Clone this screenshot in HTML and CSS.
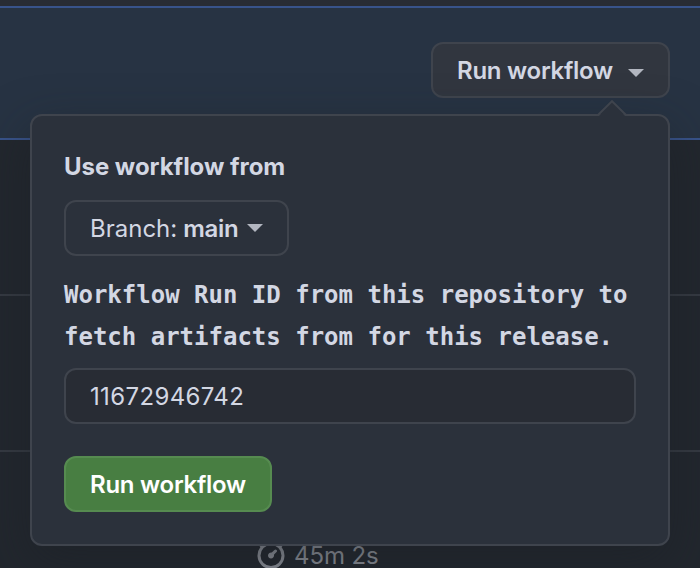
FILE: index.html
```html
<!DOCTYPE html>
<html lang="en">
<head>
<meta charset="utf-8">
<title>Run workflow</title>
<link rel="stylesheet" href="styles.css">
</head>
<body>
<main class="page">
  <section class="banner">
    <div class="dispatch">
      <button class="btn btn-trigger" type="button"><span class="label">Run workflow</span><svg class="caret" width="16" height="8" viewBox="0 0 16 8"><path d="M0 0h16L8 8z"/></svg></button>
      <div class="popover">
        <svg class="pointer" width="32" height="17" viewBox="0 0 32 17"><path class="pointer-fill" d="M2 17L16 2l14 15z"/><path class="pointer-line" d="M1.5 15.5L16 1.2l14.5 14.3"/></svg>
        <h2 class="title">Use workflow from</h2>
        <button class="btn btn-branch" type="button"><span class="branch-label">Branch:</span><span class="branch-name">main</span><svg class="caret" width="16" height="8" viewBox="0 0 16 8"><path d="M0 0h16L8 8z"/></svg></button>
        <label class="field-label" for="run-id">Workflow Run ID from this repository to fetch artifacts from for this release.</label>
        <input class="field" id="run-id" type="text" value="11672946742">
        <button class="btn btn-submit" type="button"><span class="label">Run workflow</span></button>
      </div>
    </div>
  </section>
  <section class="runs">
    <div class="run"></div>
    <div class="run"></div>
    <div class="run run-last">
      <svg class="stopwatch" width="32" height="32" viewBox="0 0 16 16"><path d="M5.75.75A.75.75 0 0 1 6.5 0h3a.75.75 0 0 1 0 1.5h-.75v1l-.001.041a6.724 6.724 0 0 1 3.464 1.435l.007-.006.75-.75a.749.749 0 0 1 1.275.326.749.749 0 0 1-.215.734l-.75.75-.006.007a6.75 6.75 0 1 1-10.548 0L2.72 5.03l-.75-.75a.751.751 0 0 1 .018-1.042.751.751 0 0 1 1.042-.018l.75.75.007.006A6.72 6.72 0 0 1 7.25 2.541V1.5H6.5a.75.75 0 0 1-.75-.75ZM8 14.5a5.25 5.25 0 1 0-.001-10.501A5.25 5.25 0 0 0 8 14.5Zm.389-6.7 1.33-1.33a.75.75 0 1 1 1.061 1.06L9.45 8.861A1.503 1.503 0 0 1 8 10.75a1.499 1.499 0 1 1 .389-2.95Z"/></svg>
      <span class="duration">45m 2s</span>
    </div>
  </section>
</main>
</body>
</html>
```
FILE: styles.css
```css
* { box-sizing: border-box; }

body {
  margin: 0;
  background: #22272e;
  color: #d3d7e3;
  font-family: Inter, "Liberation Sans", sans-serif;
  font-size: 24px;
}

.page {
  height: 568px;
  overflow: hidden;
  padding-top: 6px;
  background: #282c34;
}

.banner {
  display: flex;
  justify-content: flex-end;
  height: 134px;
  padding: 34px 30px 0 0;
  background: #273343;
  border-top: 2px solid #38538a;
  border-bottom: 2px solid #38538a;
}

.dispatch { position: relative; }

.btn {
  display: flex;
  align-items: center;
  height: 56px;
  padding: 2px 24px 0;
  border: 2px solid #3f444d;
  border-radius: 12px;
  background: #2b313b;
  color: #d3d7e3;
  font: 600 24px/1 Inter, "Liberation Sans", sans-serif;
  white-space: nowrap;
}

.label { letter-spacing: -.26px; }

.btn-trigger { width: 239px; background: #31363f; }

.caret { fill: #b2b6c0; }
.btn-trigger .caret { margin: 3px 0 0 auto; }

.popover {
  position: absolute;
  z-index: 1;
  top: 72px;
  right: 0;
  width: 640px;
  height: 432px;
  padding: 33px 32px 32px;
  background: #2b313b;
  border: 2px solid #3f444d;
  border-radius: 12px;
  box-shadow: 0 16px 48px rgba(28, 31, 38, .5);
}

.pointer {
  position: absolute;
  top: -16px;
  right: 40px;
}
.pointer-fill { fill: #2b313b; }
.pointer-line { fill: none; stroke: #3f444d; stroke-width: 2; }

.title {
  margin: 0 0 15px;
  font-size: 24px;
  font-weight: 700;
  letter-spacing: -.03px;
  line-height: 36px;
}

.btn-branch { width: 225px; }
.branch-label { font-weight: 400; }
.branch-name { margin-left: 6px; letter-spacing: -.3px; }
.btn-branch .caret { margin: -3px 0 0 auto; }

.field-label {
  display: block;
  margin: 18px -4px 10px 0;
  font: 700 24px/42px "DejaVu Sans Mono", monospace;
}

.field {
  display: block;
  width: 572px;
  height: 56px;
  padding: 0 24px;
  background: #282c34;
  border: 2px solid #3f444d;
  border-radius: 12px;
  color: #d3d7e3;
  font: 400 24px/1 Inter, "Liberation Sans", sans-serif;
  letter-spacing: .36px;
}

.btn-submit {
  margin-top: 32px;
  width: 208px;
  background: #487e42;
  border-color: #568b50;
  color: #fff;
}

.runs { background: #22272e; }
.run { height: 156px; border-bottom: 2px solid #353a42; }
.run-last {
  display: flex;
  align-items: flex-start;
  gap: 7px;
  height: 116px;
  border-bottom: 0;
  padding: 85px 0 0 255px;
  color: #90949c;
}
.stopwatch {
  flex: none;
  fill: #90949c;
}
.duration { margin-top: 7px; line-height: 24px; letter-spacing: -.1px; }
```
